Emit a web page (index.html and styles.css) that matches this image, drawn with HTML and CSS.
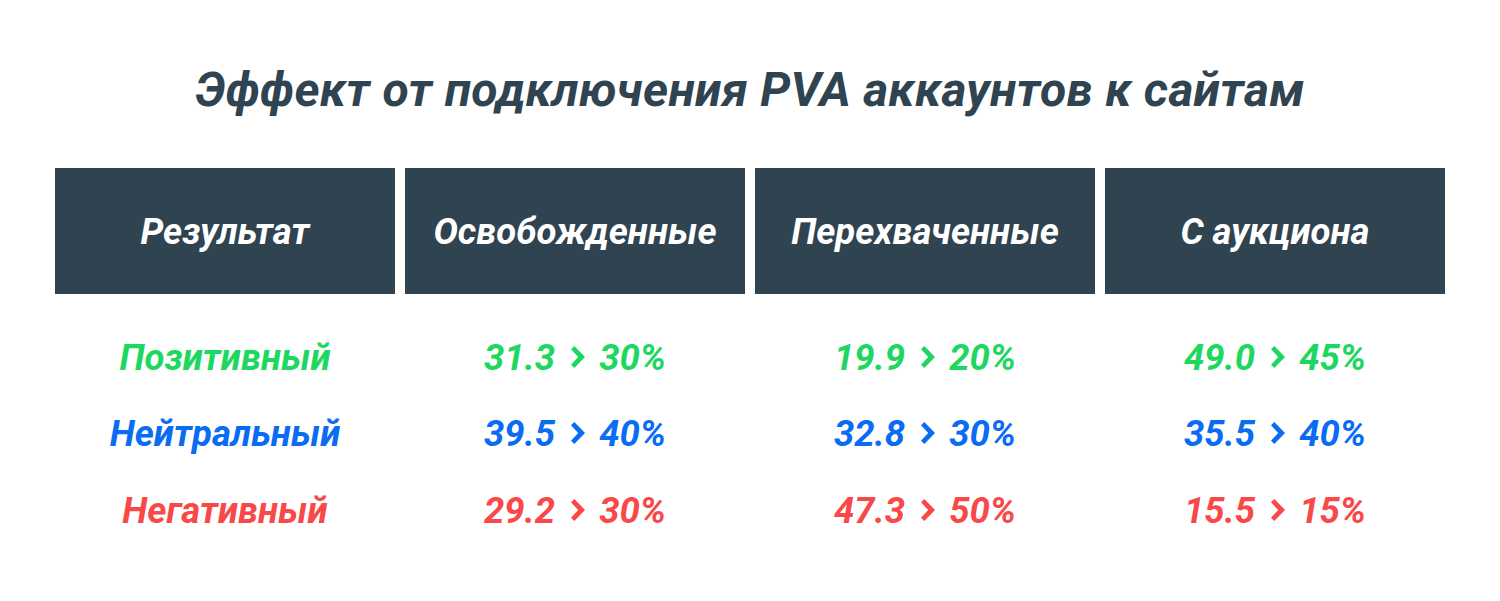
FILE: index.html
```html
<!DOCTYPE html>
<html lang="ru">
<head>
<meta charset="utf-8">
<link rel="stylesheet" href="styles.css">
</head>
<body>
<div class="page">
  <h1 class="title">Эффект от подключения PVA аккаунтов к сайтам</h1>
  <div class="row header">
    <div class="head">Результат</div>
    <div class="head">Освобожденные</div>
    <div class="head">Перехваченные</div>
    <div class="head">С аукциона</div>
  </div>
  <div class="body">
    <div class="row pos">
      <div class="cell">Позитивный</div>
      <div class="cell">31.3<svg class="chev" viewBox="0 0 14 22"><polygon points="0,3.3 3.3,0 14,11 3.3,22 0,18.7 7.2,11"/></svg>30%</div>
      <div class="cell">19.9<svg class="chev" viewBox="0 0 14 22"><polygon points="0,3.3 3.3,0 14,11 3.3,22 0,18.7 7.2,11"/></svg>20%</div>
      <div class="cell">49.0<svg class="chev" viewBox="0 0 14 22"><polygon points="0,3.3 3.3,0 14,11 3.3,22 0,18.7 7.2,11"/></svg>45%</div>
    </div>
    <div class="row neu">
      <div class="cell">Нейтральный</div>
      <div class="cell">39.5<svg class="chev" viewBox="0 0 14 22"><polygon points="0,3.3 3.3,0 14,11 3.3,22 0,18.7 7.2,11"/></svg>40%</div>
      <div class="cell">32.8<svg class="chev" viewBox="0 0 14 22"><polygon points="0,3.3 3.3,0 14,11 3.3,22 0,18.7 7.2,11"/></svg>30%</div>
      <div class="cell">35.5<svg class="chev" viewBox="0 0 14 22"><polygon points="0,3.3 3.3,0 14,11 3.3,22 0,18.7 7.2,11"/></svg>40%</div>
    </div>
    <div class="row neg">
      <div class="cell">Негативный</div>
      <div class="cell">29.2<svg class="chev" viewBox="0 0 14 22"><polygon points="0,3.3 3.3,0 14,11 3.3,22 0,18.7 7.2,11"/></svg>30%</div>
      <div class="cell">47.3<svg class="chev" viewBox="0 0 14 22"><polygon points="0,3.3 3.3,0 14,11 3.3,22 0,18.7 7.2,11"/></svg>50%</div>
      <div class="cell">15.5<svg class="chev" viewBox="0 0 14 22"><polygon points="0,3.3 3.3,0 14,11 3.3,22 0,18.7 7.2,11"/></svg>15%</div>
    </div>
  </div>
</div>
</body>
</html>
```

FILE: styles.css
```css
html, body {
  margin: 0;
  padding: 0;
  background: #ffffff;
}
body {
  font-family: Roboto, "Noto Sans", sans-serif;
  font-weight: 700;
  font-style: italic;
}
.page {
  width: 1500px;
  height: 601px;
  padding: 56px 55px 0;
  box-sizing: border-box;
}
.title {
  margin: 0;
  font-size: 48px;
  line-height: 68px;
  letter-spacing: 0.3px;
  text-align: center;
  color: #2f4350;
  font-weight: 700;
}
.row {
  display: grid;
  grid-template-columns: repeat(4, 340px);
  column-gap: 10px;
}
.header {
  margin-top: 44px;
  height: 126px;
}
.head {
  background: #2f4350;
  color: #ffffff;
  font-size: 36.5px;
  display: flex;
  align-items: center;
  justify-content: center;
}
.body {
  padding-top: 25px;
}
.body .row {
  height: 76.5px;
}
.cell {
  font-size: 36.5px;
  display: flex;
  align-items: center;
  justify-content: center;
}
.chev {
  display: block;
  flex: none;
  width: 14px;
  height: 22px;
  min-height: 22px;
  margin: 0 14px 1px 16px;
  fill: currentColor;
}
.pos { color: #1ed760; }
.neu { color: #0a6cf2; }
.neg { color: #f84848; }
```
